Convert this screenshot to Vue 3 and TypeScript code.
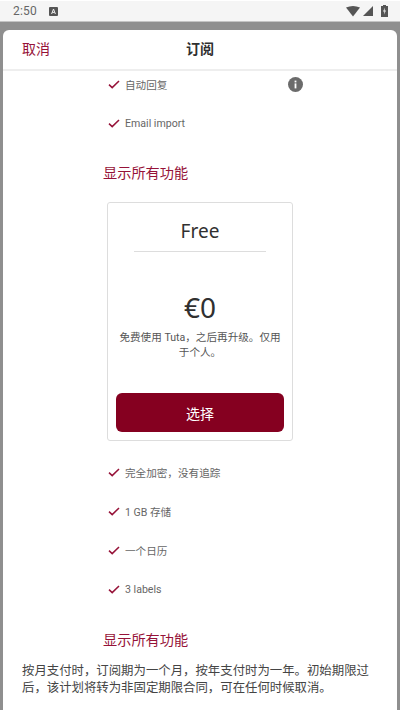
<script setup lang="ts">
const topFeatures = [
  { text: '自动回复', info: true },
  { text: 'Email import', info: false },
]
const freeFeatures = ['完全加密，没有追踪', '1 GB 存储', '一个日历', '3 labels']
</script>

<template>
  <div class="screen">
    <div class="status">
      <div class="status-left">
        <span class="time">2:50</span>
        <svg class="notif" width="9" height="9" viewBox="0 0 9 9">
          <rect width="9" height="9" rx="1" fill="#555" />
          <path d="M2.6 7 4.5 2 6.4 7M3.3 5.4h2.4" fill="none" stroke="#eee" stroke-width="1" />
        </svg>
      </div>
      <div class="status-right">
        <svg width="14" height="11" viewBox="0 0 14 11"><path d="M0 1.5Q7-1.5 14 1.5L7 10.5Z" fill="#555" /></svg>
        <svg width="10" height="10" viewBox="0 0 10 10"><path d="M10 0V10H0Z" fill="#555" /></svg>
        <svg class="batt" width="7" height="12" viewBox="0 0 7 12">
          <path d="M2 0H5V1H7V12H0V1H2Z" fill="#555" />
          <path d="M4 2.5 2 6.5H3.4L3 9.5 5 5.5H3.6Z" fill="#eee" />
        </svg>
      </div>
    </div>
    <div class="backdrop">
      <div class="sheet">
        <header class="head">
          <span class="cancel">取消</span>
          <span class="title">订阅</span>
          <span class="head-spacer"></span>
        </header>
        <main class="body">
          <ul class="features first">
            <li v-for="f in topFeatures" :key="f.text" class="feature">
              <svg class="check" width="12" height="9" viewBox="0 0 12 9"><path d="M1 4.6 4.2 7.6 11 1" fill="none" stroke="#961238" stroke-width="1.5" /></svg>
              <span>{{ f.text }}</span>
              <svg v-if="f.info" class="info" width="15" height="15" viewBox="0 0 15 15">
                <circle cx="7.5" cy="7.5" r="7.5" fill="#6b6b6b" />
                <rect x="6.6" y="6.4" width="1.8" height="5" fill="#fff" />
                <rect x="6.6" y="3.6" width="1.8" height="1.8" fill="#fff" />
              </svg>
            </li>
          </ul>
          <div class="more">显示所有功能</div>
          <section class="card">
            <h2 class="plan">Free</h2>
            <div class="price">€0</div>
            <p class="desc">免费使用 Tuta，之后再升级。仅用于个人。</p>
            <button class="select">选择</button>
          </section>
          <ul class="features second">
            <li v-for="f in freeFeatures" :key="f" class="feature">
              <svg class="check" width="12" height="9" viewBox="0 0 12 9"><path d="M1 4.6 4.2 7.6 11 1" fill="none" stroke="#961238" stroke-width="1.5" /></svg>
              <span>{{ f }}</span>
            </li>
          </ul>
          <div class="more last">显示所有功能</div>
          <p class="note">按月支付时，订阅期为一个月，按年支付时为一年。初始期限过后，该计划将转为非固定期限合同，可在任何时候取消。</p>
        </main>
      </div>
    </div>
  </div>
</template>

<style scoped>
.screen {
  width: 400px;
  height: 710px;
  display: flex;
  flex-direction: column;
  overflow: hidden;
  font-family: Roboto, "Noto Sans CJK SC", sans-serif;
  text-spacing-trim: space-all;
  background: #8f8f8f;
}
.status {
  height: 22px;
  flex: none;
  box-sizing: border-box;
  background: #f5f5f5;
  border-top: 1px solid #fff;
  border-bottom: 1px solid #c4c4c4;
  padding: 0 12px 0 13px;
  display: flex;
  align-items: center;
  justify-content: space-between;
}
.status-left, .status-right { display: flex; align-items: center; }
.time { font-size: 12px; color: #666; letter-spacing: 0.2px; }
.notif { margin-left: 12px; }
.status-right { gap: 3px; }
.batt { margin-left: 5px; }
.backdrop {
  flex: 1;
  min-height: 0;
  padding: 8px 3px 0;
  display: flex;
}
.sheet {
  flex: 1;
  min-width: 0;
  background: #fff;
  border-radius: 6px 6px 0 0;
  display: flex;
  flex-direction: column;
  overflow: hidden;
}
.head {
  height: 41px;
  flex: none;
  box-sizing: border-box;
  border-bottom: 2px solid #eee;
  padding: 0 19px 3px;
  display: flex;
  align-items: center;
  justify-content: space-between;
}
.cancel { font-size: 14px; color: #961238; width: 60px; }
.title { font-size: 14px; font-weight: 700; color: #303030; }
.head-spacer { width: 60px; }
.body { flex: 1; min-height: 0; display: flex; flex-direction: column; align-items: center; }
.features {
  list-style: none;
  margin: 0;
  padding: 0;
  width: 186px;
}
.features.first { margin-top: -6px; }
.feature {
  position: relative;
  height: 39px;
  display: flex;
  align-items: center;
  gap: 5px;
  font-size: 10.6px;
  color: #666;
  white-space: nowrap;
}
.check { margin-left: 1px; flex: none; }
.info { position: absolute; left: 181px; top: 12px; }
.more {
  width: 186px;
  font-size: 14.2px;
  color: #961238;
  line-height: 20px;
  margin-top: 20px;
  margin-left: -8px;
}
.last { margin-top: 21px; }
.card {
  width: 186px;
  height: 239px;
  box-sizing: border-box;
  margin-top: 19px;
  border: 1px solid #ddd;
  border-radius: 3px;
  padding: 0 8px;
  display: flex;
  flex-direction: column;
  align-items: center;
}
.plan {
  width: 132px;
  margin: 0;
  height: 49px;
  line-height: 56px;
  box-sizing: border-box;
  border-bottom: 1px solid #ddd;
  text-align: center;
  font-size: 19px;
  font-weight: 400;
  font-family: "Noto Sans", sans-serif;
  color: #303030;
}
.price {
  margin-top: 37px;
  font-size: 28px;
  line-height: 36px;
  font-family: "Noto Sans", sans-serif;
  color: #303030;
}
.desc {
  margin: 5px 0 0;
  font-size: 10.6px;
  line-height: 15px;
  color: #555;
  text-align: center;
  width: 170px;
}
.select {
  margin-top: auto;
  margin-bottom: 8px;
  width: 168px;
  height: 39px;
  border: none;
  border-radius: 6px;
  background: #850020;
  color: #fff;
  font-size: 14px;
  font-family: inherit;
}
.second { margin-top: 12px; }
.note {
  margin: 12px 0 0;
  width: 356px;
  font-size: 12.4px;
  line-height: 17px;
  color: #444;
}
</style>

<style>
html, body { margin: 0; padding: 0; }
</style>
